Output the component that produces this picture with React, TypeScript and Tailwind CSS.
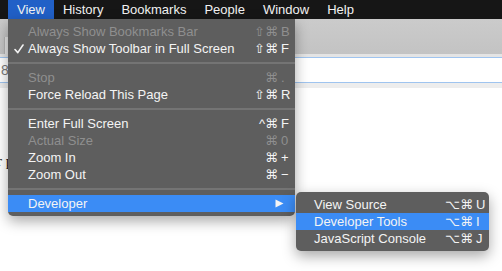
import React from 'react'

type Item =
  | { sep: true }
  | { label: string; mods?: string; keyc?: string; disabled?: boolean; checked?: boolean; submenu?: boolean; active?: boolean }

const viewItems: Item[] = [
  { label: 'Always Show Bookmarks Bar', mods: '⇧⌘', keyc: 'B', disabled: true },
  { label: 'Always Show Toolbar in Full Screen', mods: '⇧⌘', keyc: 'F', checked: true },
  { sep: true },
  { label: 'Stop', mods: '⌘', keyc: '.', disabled: true },
  { label: 'Force Reload This Page', mods: '⇧⌘', keyc: 'R' },
  { sep: true },
  { label: 'Enter Full Screen', mods: '^⌘', keyc: 'F' },
  { label: 'Actual Size', mods: '⌘', keyc: '0', disabled: true },
  { label: 'Zoom In', mods: '⌘', keyc: '+' },
  { label: 'Zoom Out', mods: '⌘', keyc: '−' },
  { sep: true },
  { label: 'Developer', submenu: true, active: true },
]

const devItems: Item[] = [
  { label: 'View Source', mods: '⌥⌘', keyc: 'U' },
  { label: 'Developer Tools', mods: '⌥⌘', keyc: 'I', active: true },
  { label: 'JavaScript Console', mods: '⌥⌘', keyc: 'J' },
]

function Check() {
  return (
    <svg className="absolute left-[6px] top-[4px]" width="10" height="10" viewBox="0 0 10 10">
      <path d="M1 5.5 L3.8 8.6 L9 1" fill="none" stroke="#f2f2f2" strokeWidth="1.6" strokeLinecap="round" strokeLinejoin="round" />
    </svg>
  )
}

function Row({ item, pl, pr }: { item: Item; pl: string; pr: string }) {
  if ('sep' in item) {
    return (
      <div className="flex h-[12px] items-center">
        <div className="h-[2px] w-full bg-[#747474]" />
      </div>
    )
  }
  const color = item.disabled ? 'text-[#8f8f8f]' : 'text-[#f4f4f4]'
  return (
    <div className={`relative flex h-[17px] items-center ${pl} ${pr} ${color} ${item.active ? 'bg-[#3b8cf5]' : ''}`}>
      {item.checked && <Check />}
      <span className="flex-1 whitespace-nowrap">{item.label}</span>
      {item.mods && (
        <span className="flex">
          <span className="w-[30px] text-right">{item.mods}</span>
          <span className="w-[12px] pl-[3px]">{item.keyc}</span>
        </span>
      )}
      {item.submenu && (
        <svg className="mr-[6px]" width="9" height="9" viewBox="0 0 9 9">
          <path d="M0.5 0.5 L8.5 4.5 L0.5 8.5 Z" fill="#f4f4f4" />
        </svg>
      )}
    </div>
  )
}

export default function App() {
  const menus = ['View', 'History', 'Bookmarks', 'People', 'Window', 'Help']
  return (
    <div className="relative h-[271px] w-[502px] overflow-hidden bg-white font-['Liberation_Sans','DejaVu_Sans',sans-serif] text-[13px]">
      <div className="flex h-[19px] bg-[#161616] pl-[8px] leading-[19px] text-[#f2f2f2]">
        {menus.map((m, i) => (
          <div key={m} className={`px-[9px] ${i === 0 ? 'bg-[#2160c7]' : ''}`}>
            {m}
          </div>
        ))}
      </div>
      <div className="flex h-[35px] flex-col bg-gradient-to-b from-[#cbcbcb] to-[#c3c3c3]">
        <div className="h-[18px]" />
        <div className="flex flex-1">
          <div className="ml-[4px] w-[240px] border-l border-[#b5b5b5] bg-[#e6e6e6]" />
        </div>
      </div>
      <div className="h-[3px] bg-[#e4e4e4]" />
      <div className="flex h-[26px] items-center border-y border-[#9fc4ef] bg-white">
        <span className="ml-[1px] text-[14px] text-[#7a7a7a]">8</span>
      </div>
      <div className="h-[5px] bg-[#ededed]" />
      <div className="-ml-[3px] mt-[62px] font-['Liberation_Serif',serif] text-[15px] text-[#222]">r p</div>

      <div className="absolute left-[8px] top-[19px] w-[287px] rounded-b-[5px] bg-[#5e5e5e] py-[4px] shadow-[0_5px_14px_rgba(0,0,0,0.35)]">
        {viewItems.map((it, i) => (
          <Row key={i} item={it} pl="pl-[20px]" pr="pr-[5px]" />
        ))}
      </div>

      <div className="absolute left-[296px] top-[192px] w-[193px] rounded-[5px] bg-[#5e5e5e] py-[4px] shadow-[0_5px_14px_rgba(0,0,0,0.35)]">
        {devItems.map((it, i) => (
          <Row key={i} item={it} pl="pl-[18px]" pr="pr-[4px]" />
        ))}
      </div>
    </div>
  )
}
